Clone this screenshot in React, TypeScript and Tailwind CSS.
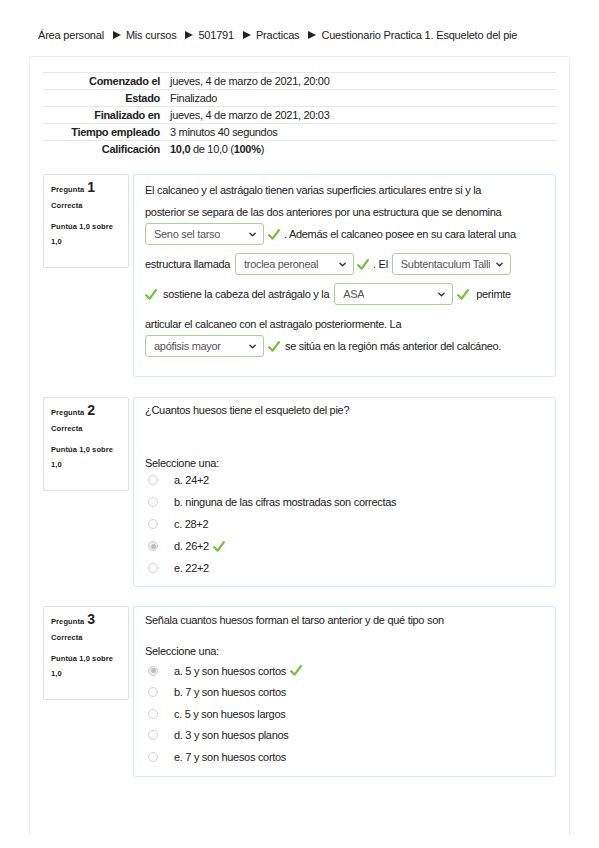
import type { ReactNode } from 'react'

const crumbs = ['Área personal', 'Mis cursos', '501791', 'Practicas', 'Cuestionario Practica 1. Esqueleto del pie']

const summary: { label: string; value: ReactNode }[] = [
  { label: 'Comenzado el', value: 'jueves, 4 de marzo de 2021, 20:00' },
  { label: 'Estado', value: 'Finalizado' },
  { label: 'Finalizado en', value: 'jueves, 4 de marzo de 2021, 20:03' },
  { label: 'Tiempo empleado', value: '3 minutos 40 segundos' },
  {
    label: 'Calificación',
    value: (
      <>
        <b>10,0</b> de 10,0 (<b>100%</b>)
      </>
    ),
  },
]

function Check() {
  return (
    <svg viewBox="0 0 12 11" className="block w-[12px] h-[11px] shrink-0" fill="none">
      <path d="M1.2 6.2 L4.6 9.6 L10.8 1.2" stroke="#7dc143" strokeWidth="2.3" strokeLinecap="round" strokeLinejoin="round" />
    </svg>
  )
}

function Select({ value }: { value: string }) {
  return (
    <span className="inline-flex items-center justify-between w-[119px] h-[22px] border border-[#a8d49a] rounded-[3px] bg-white pl-[8px] pr-[7px] text-[#555] shrink-0">
      <span className="truncate">{value}</span>
      <svg viewBox="0 0 8 5" className="w-[7px] h-[5px] shrink-0" fill="none">
        <path d="M1 1 L4 4 L7 1" stroke="#333" strokeWidth="1.6" strokeLinecap="round" strokeLinejoin="round" />
      </svg>
    </span>
  )
}

function Info({ n }: { n: number }) {
  return (
    <div className="w-[86px] h-[94px] shrink-0 border border-[#e0e0e0] rounded-[2px] bg-white px-[7px] pt-[3px] text-[7.5px] font-bold text-[#222] tracking-[0.1px]">
      <div className="h-[16px] flex items-baseline gap-[3px] pt-[2px]">
        <span>Pregunta</span>
        <span className="text-[14px] leading-[14px] font-bold">{n}</span>
      </div>
      <div className="mt-[6px] leading-[12px]">Correcta</div>
      <div className="mt-[7px] leading-[15px]">
        Puntúa 1,0 sobre
        <br />
        1,0
      </div>
    </div>
  )
}

function Radio({ checked }: { checked?: boolean }) {
  return (
    <span
      className={
        checked
          ? 'flex w-[10px] h-[10px] rounded-full border border-[#cfcfcf] bg-[#ececec] items-center justify-center shrink-0'
          : 'block w-[10px] h-[10px] rounded-full border border-[#d6d6d6] bg-[#fafafa] shrink-0'
      }
    >
      {checked && <span className="block w-[5px] h-[5px] rounded-full bg-[#bdbdbd]" />}
    </span>
  )
}

function Options({ items, right, rowH }: { items: string[]; right: number; rowH: string }) {
  return (
    <div>
      {items.map((it, i) => (
        <div key={it} className={`flex items-center ${rowH}`}>
          <span className="ml-[3px] mr-[16px]">
            <Radio checked={i === right} />
          </span>
          <span>{it}</span>
          {i === right && (
            <span className="ml-[4px]">
              <Check />
            </span>
          )}
        </div>
      ))}
    </div>
  )
}

export default function App() {
  return (
    <div className="bg-white min-h-[848px] text-[#222] text-[11px] tracking-[-0.3px] font-['Liberation_Sans',Arial,sans-serif]">
      <nav className="pt-[28px] pl-[38px] h-[56px] flex items-start leading-[14px] tracking-[-0.2px]">
        {crumbs.map((c, i) => (
          <span key={c} className="flex items-center">
            {i > 0 && (
              <svg viewBox="0 0 8 8" className="w-[8px] h-[8px] ml-[9px] mr-[5px]">
                <path d="M0 0 L8 4 L0 8 Z" fill="#222" />
              </svg>
            )}
            <span>{c}</span>
          </span>
        ))}
      </nav>

      <div className="mx-[29px] w-[541px] border border-b-0 border-[#ececec] rounded-t-[3px] px-[13px] pt-[15px] pb-[58px]">
        <div>
          {summary.map(r => (
            <div key={r.label} className="grid grid-cols-[127px_1fr] h-[17px] items-center border-t border-[#e8e8e8] last:h-[18px]">
              <span className="text-right pr-[10px] font-bold">{r.label}</span>
              <span>{r.value}</span>
            </div>
          ))}
        </div>

        <div className="mt-[16px] flex gap-[4px] items-start">
          <Info n={1} />
          <div className="flex-1 border border-[#d3ecf3] rounded-[3px] pl-[11px] pr-[10px] pt-[4px] pb-[11px]">
            <div className="h-[22px] flex items-center">El calcaneo y el astrágalo tienen varias superficies articulares entre si y la</div>
            <div className="h-[22px] flex items-center">posterior se separa de las dos anteriores por una estructura que se denomina</div>
            <div className="h-[22px] mb-[8px] flex items-center">
              <Select value="Seno sel tarso" />
              <span className="ml-[4px]"><Check /></span>
              <span className="ml-[4px]">. Además el calcaneo posee en su cara lateral una</span>
            </div>
            <div className="h-[22px] mb-[8px] flex items-center">
              <span>estructura llamada</span>
              <span className="ml-[5px]"><Select value="troclea peroneal" /></span>
              <span className="ml-[3px]"><Check /></span>
              <span className="ml-[4px]">. El</span>
              <span className="ml-[4px]"><Select value="Subtentaculum Talli" /></span>
            </div>
            <div className="h-[22px] mb-[8px] flex items-center">
              <Check />
              <span className="ml-[6px]">sostiene la cabeza del astrágalo y la</span>
              <span className="ml-[5px]"><Select value="ASA" /></span>
              <span className="ml-[4px]"><Check /></span>
              <span className="ml-[7px]">perimte</span>
            </div>
            <div className="h-[22px] flex items-center">articular el calcaneo con el astragalo posteriormente. La</div>
            <div className="h-[22px] mb-[8px] flex items-center">
              <Select value="apófisis mayor" />
              <span className="ml-[4px]"><Check /></span>
              <span className="ml-[5px]">se sitúa en la región más anterior del calcáneo.</span>
            </div>
          </div>
        </div>

        <div className="mt-[20px] flex gap-[4px] items-start">
          <Info n={2} />
          <div className="flex-1 border border-[#d3ecf3] rounded-[3px] pl-[11px] pr-[10px] pt-[3px] pb-[7px]">
            <div className="h-[18px] flex items-center">¿Cuantos huesos tiene el esqueleto del pie?</div>
            <div className="mt-[38px] h-[12px] flex items-center">Seleccione una:</div>
            <Options
              rowH="h-[22px]"
              right={3}
              items={['a. 24+2', 'b. ninguna de las cifras mostradas son correctas', 'c. 28+2', 'd. 26+2', 'e. 22+2']}
            />
          </div>
        </div>

        <div className="mt-[19px] flex gap-[4px] items-start">
          <Info n={3} />
          <div className="flex-1 border border-[#d3ecf3] rounded-[3px] pl-[11px] pr-[10px] pt-[4px] pb-[8px]">
            <div className="h-[18px] flex items-center">Señala cuantos huesos forman el tarso anterior y de qué tipo son</div>
            <div className="mt-[16px] h-[12px] flex items-center">Seleccione una:</div>
            <div className="mt-[3px]">
              <Options
                rowH="h-[21.5px]"
                right={0}
                items={['a. 5 y son huesos cortos', 'b. 7 y son huesos cortos', 'c. 5 y son huesos largos', 'd. 3 y son huesos planos', 'e. 7 y son huesos cortos']}
              />
            </div>
          </div>
        </div>
      </div>
    </div>
  )
}
